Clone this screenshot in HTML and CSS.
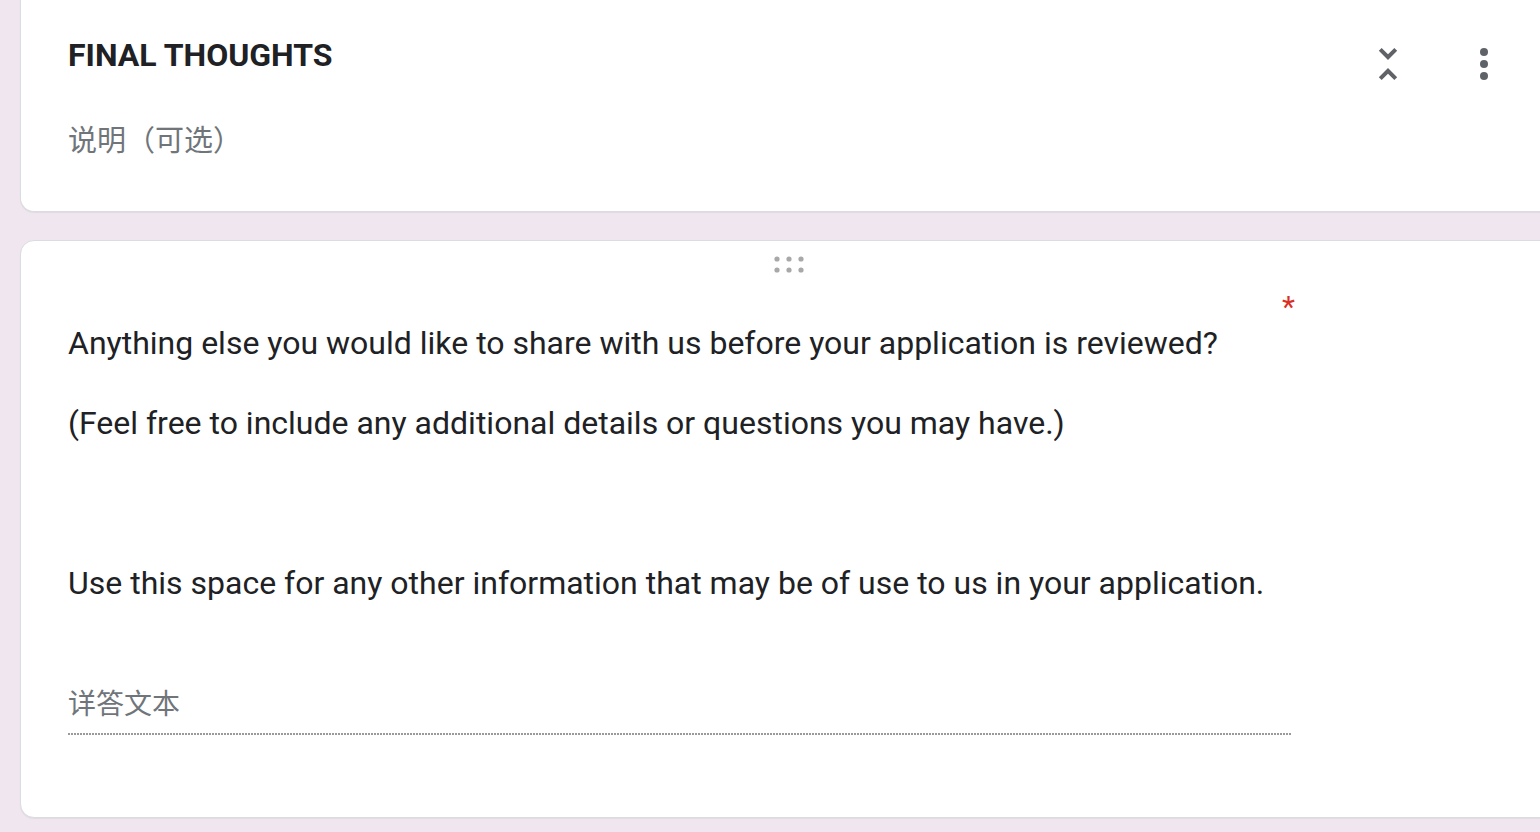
FILE: index.html
```html
<!DOCTYPE html>
<html lang="zh-CN">
<head>
<meta charset="utf-8">
<title>Final thoughts</title>
<link rel="stylesheet" href="styles.css">
</head>
<body>
<main class="page">
  <section class="card section-card">
    <div class="section-head">
      <h2 class="section-title">FINAL THOUGHTS</h2>
      <div class="section-tools">
        <button class="icon-btn" aria-label="收起">
          <svg viewBox="0 0 24 24" width="48" height="48"><path fill="#5f6368" d="M7.41 18.59L8.83 20 12 16.83 15.17 20l1.41-1.41L12 14l-4.59 4.59zm9.18-13.18L15.17 4 12 7.17 8.83 4 7.41 5.41 12 10l4.59-4.59z"/></svg>
        </button>
        <button class="icon-btn" aria-label="更多">
          <svg viewBox="0 0 24 24" width="48" height="48"><circle cx="12" cy="6" r="2" fill="#5f6368"/><circle cx="12" cy="12" r="2" fill="#5f6368"/><circle cx="12" cy="18" r="2" fill="#5f6368"/></svg>
        </button>
      </div>
    </div>
    <div class="section-desc">说明（可选）</div>
  </section>

  <section class="card question-card">
    <div class="drag-handle">
      <svg viewBox="0 0 30 17" width="30" height="17">
        <circle cx="3" cy="3" r="2.6" fill="#a8a8a8"/><circle cx="15" cy="3" r="2.6" fill="#a8a8a8"/><circle cx="27" cy="3" r="2.6" fill="#a8a8a8"/>
        <circle cx="3" cy="14" r="2.6" fill="#a8a8a8"/><circle cx="15" cy="14" r="2.6" fill="#a8a8a8"/><circle cx="27" cy="14" r="2.6" fill="#a8a8a8"/>
      </svg>
    </div>
    <div class="question-row">
      <div class="question-text">
        <p class="q-line gap-1">Anything else you would like to share with us before your application is reviewed?</p>
        <p class="q-line gap-3">(Feel free to include any additional details or questions you may have.)</p>
        <p class="q-line">Use this space for any other information that may be of use to us in your application.</p>
      </div>
      <span class="required">*</span>
    </div>
    <div class="answer">
      <div class="answer-placeholder">详答文本</div>
      <div class="answer-line"></div>
    </div>
  </section>
</main>
</body>
</html>
```

FILE: styles.css
```css
html, body {
  margin: 0;
  padding: 0;
}
body {
  background: #f0e6ef;
  font-family: Roboto, "Noto Sans CJK SC", Arial, sans-serif;
  color: #202124;
  overflow: hidden;
  width: 1540px;
  height: 832px;
}
.page {
  padding-left: 20px;
  display: flex;
  flex-direction: column;
  gap: 28px;
}
.card {
  box-sizing: border-box;
  width: 1538px;
  background: #fff;
  border: 1px solid #dadce0;
  border-radius: 14px;
  box-shadow: 0 1px 1px rgba(0,0,0,0.06);
}
.section-card {
  height: 212px;
  border-top: none;
  border-top-left-radius: 0;
  border-top-right-radius: 0;
  padding: 35px 0 0 47px;
}
.section-head {
  display: flex;
  align-items: flex-start;
  justify-content: space-between;
}
.section-title {
  margin: 0;
  font-size: 32px;
  line-height: 40px;
  font-weight: 700;
  color: #202124;
}
.section-tools {
  display: flex;
  gap: 48px;
  margin-top: 5px;
  margin-right: 49px;
}
.icon-btn {
  width: 48px;
  height: 48px;
  padding: 0;
  border: none;
  background: none;
  display: flex;
}
.section-desc {
  margin-top: 33px;
  font-size: 29px;
  line-height: 40px;
  color: #70757a;
}
.question-card {
  height: 578px;
  padding-left: 47px;
}
.drag-handle {
  height: 46px;
  display: flex;
  align-items: center;
  justify-content: center;
  margin-left: -47px;
}
.question-row {
  display: flex;
  align-items: flex-start;
}
.question-text {
  width: 1214px;
  padding-top: 36px;
}
.q-line {
  margin: 0;
  font-size: 32px;
  line-height: 40px;
  color: #202124;
}
.gap-1 {
  margin-bottom: 40px;
}
.gap-3 {
  margin-bottom: 120px;
}
.required {
  font-size: 30px;
  line-height: 40px;
  color: #d93025;
}
.answer {
  width: 1224px;
  margin-top: 82px;
}
.answer-placeholder {
  font-size: 28px;
  line-height: 40px;
  color: #70757a;
}
.answer-line {
  margin-top: 8px;
  height: 2px;
  background: repeating-linear-gradient(to right, #9a9a9a 0 1.6px, transparent 1.6px 3px);
}
```
